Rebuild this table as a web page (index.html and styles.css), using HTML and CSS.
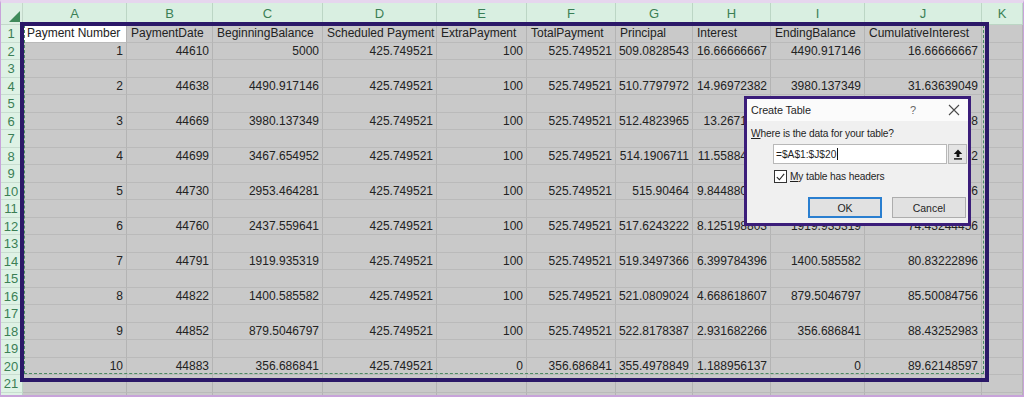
FILE: index.html
```html
<!DOCTYPE html>
<html>
<head>
<meta charset="utf-8">
<link rel="stylesheet" href="styles.css">
</head>
<body>
<div class="screen">
  <div class="sheet">
    <div class="corner"><span class="tri"></span></div>
    <div class="ch">A</div><div class="ch">B</div><div class="ch">C</div><div class="ch">D</div><div class="ch">E</div><div class="ch">F</div><div class="ch">G</div><div class="ch">H</div><div class="ch">I</div><div class="ch">J</div><div class="ch">K</div>

    <div class="rh">1</div>
    <div class="c hd active">Payment Number</div><div class="c hd">PaymentDate</div><div class="c hd">BeginningBalance</div><div class="c hd">Scheduled Payment</div><div class="c hd">ExtraPayment</div><div class="c hd">TotalPayment</div><div class="c hd">Principal</div><div class="c hd">Interest</div><div class="c hd">EndingBalance</div><div class="c hd">CumulativeInterest</div><div class="c"></div>

    <div class="rh">2</div>
    <div class="c n">1</div><div class="c n">44610</div><div class="c n">5000</div><div class="c n">425.749521</div><div class="c n">100</div><div class="c n">525.749521</div><div class="c n">509.0828543</div><div class="c n">16.66666667</div><div class="c n">4490.917146</div><div class="c n">16.66666667</div><div class="c"></div>
    <div class="rh">3</div>
    <div class="c"></div><div class="c"></div><div class="c"></div><div class="c"></div><div class="c"></div><div class="c"></div><div class="c"></div><div class="c"></div><div class="c"></div><div class="c"></div><div class="c"></div>

    <div class="rh">4</div>
    <div class="c n">2</div><div class="c n">44638</div><div class="c n">4490.917146</div><div class="c n">425.749521</div><div class="c n">100</div><div class="c n">525.749521</div><div class="c n">510.7797972</div><div class="c n">14.96972382</div><div class="c n">3980.137349</div><div class="c n">31.63639049</div><div class="c"></div>
    <div class="rh">5</div>
    <div class="c"></div><div class="c"></div><div class="c"></div><div class="c"></div><div class="c"></div><div class="c"></div><div class="c"></div><div class="c"></div><div class="c"></div><div class="c"></div><div class="c"></div>

    <div class="rh">6</div>
    <div class="c n">3</div><div class="c n">44669</div><div class="c n">3980.137349</div><div class="c n">425.749521</div><div class="c n">100</div><div class="c n">525.749521</div><div class="c n">512.4823965</div><div class="c n">13.2671245</div><div class="c n">3467.654952</div><div class="c n">44.90351498</div><div class="c"></div>
    <div class="rh">7</div>
    <div class="c"></div><div class="c"></div><div class="c"></div><div class="c"></div><div class="c"></div><div class="c"></div><div class="c"></div><div class="c"></div><div class="c"></div><div class="c"></div><div class="c"></div>

    <div class="rh">8</div>
    <div class="c n">4</div><div class="c n">44699</div><div class="c n">3467.654952</div><div class="c n">425.749521</div><div class="c n">100</div><div class="c n">525.749521</div><div class="c n">514.1906711</div><div class="c n">11.55884984</div><div class="c n">2953.464281</div><div class="c n">56.46236482</div><div class="c"></div>
    <div class="rh">9</div>
    <div class="c"></div><div class="c"></div><div class="c"></div><div class="c"></div><div class="c"></div><div class="c"></div><div class="c"></div><div class="c"></div><div class="c"></div><div class="c"></div><div class="c"></div>

    <div class="rh">10</div>
    <div class="c n">5</div><div class="c n">44730</div><div class="c n">2953.464281</div><div class="c n">425.749521</div><div class="c n">100</div><div class="c n">525.749521</div><div class="c n">515.90464</div><div class="c n">9.844880937</div><div class="c n">2437.559641</div><div class="c n">66.30724576</div><div class="c"></div>
    <div class="rh">11</div>
    <div class="c"></div><div class="c"></div><div class="c"></div><div class="c"></div><div class="c"></div><div class="c"></div><div class="c"></div><div class="c"></div><div class="c"></div><div class="c"></div><div class="c"></div>

    <div class="rh">12</div>
    <div class="c n">6</div><div class="c n">44760</div><div class="c n">2437.559641</div><div class="c n">425.749521</div><div class="c n">100</div><div class="c n">525.749521</div><div class="c n">517.6243222</div><div class="c n">8.125198803</div><div class="c n">1919.935319</div><div class="c n">74.43244456</div><div class="c"></div>
    <div class="rh">13</div>
    <div class="c"></div><div class="c"></div><div class="c"></div><div class="c"></div><div class="c"></div><div class="c"></div><div class="c"></div><div class="c"></div><div class="c"></div><div class="c"></div><div class="c"></div>

    <div class="rh">14</div>
    <div class="c n">7</div><div class="c n">44791</div><div class="c n">1919.935319</div><div class="c n">425.749521</div><div class="c n">100</div><div class="c n">525.749521</div><div class="c n">519.3497366</div><div class="c n">6.399784396</div><div class="c n">1400.585582</div><div class="c n">80.83222896</div><div class="c"></div>
    <div class="rh">15</div>
    <div class="c"></div><div class="c"></div><div class="c"></div><div class="c"></div><div class="c"></div><div class="c"></div><div class="c"></div><div class="c"></div><div class="c"></div><div class="c"></div><div class="c"></div>

    <div class="rh">16</div>
    <div class="c n">8</div><div class="c n">44822</div><div class="c n">1400.585582</div><div class="c n">425.749521</div><div class="c n">100</div><div class="c n">525.749521</div><div class="c n">521.0809024</div><div class="c n">4.668618607</div><div class="c n">879.5046797</div><div class="c n">85.50084756</div><div class="c"></div>
    <div class="rh">17</div>
    <div class="c"></div><div class="c"></div><div class="c"></div><div class="c"></div><div class="c"></div><div class="c"></div><div class="c"></div><div class="c"></div><div class="c"></div><div class="c"></div><div class="c"></div>

    <div class="rh">18</div>
    <div class="c n">9</div><div class="c n">44852</div><div class="c n">879.5046797</div><div class="c n">425.749521</div><div class="c n">100</div><div class="c n">525.749521</div><div class="c n">522.8178387</div><div class="c n">2.931682266</div><div class="c n">356.686841</div><div class="c n">88.43252983</div><div class="c"></div>
    <div class="rh">19</div>
    <div class="c"></div><div class="c"></div><div class="c"></div><div class="c"></div><div class="c"></div><div class="c"></div><div class="c"></div><div class="c"></div><div class="c"></div><div class="c"></div><div class="c"></div>

    <div class="rh">20</div>
    <div class="c n">10</div><div class="c n">44883</div><div class="c n">356.686841</div><div class="c n">425.749521</div><div class="c n">0</div><div class="c n">356.686841</div><div class="c n">355.4978849</div><div class="c n">1.188956137</div><div class="c n">0</div><div class="c n">89.62148597</div><div class="c"></div>
    <div class="rh">21</div>
    <div class="c"></div><div class="c"></div><div class="c"></div><div class="c"></div><div class="c"></div><div class="c"></div><div class="c"></div><div class="c"></div><div class="c"></div><div class="c"></div><div class="c"></div>
    <div class="rh"></div>
    <div class="c"></div><div class="c"></div><div class="c"></div><div class="c"></div><div class="c"></div><div class="c"></div><div class="c"></div><div class="c"></div><div class="c"></div><div class="c"></div><div class="c"></div>
  </div>

  <div class="ants"></div>
  <div class="frame"></div>

  <div class="dialog">
    <div class="titlebar">
      <span class="title">Create Table</span>
      <span class="help">?</span>
      <svg class="close" width="12" height="12" viewBox="0 0 12 12"><path d="M1 1L11 11M11 1L1 11" stroke="#4a4a4a" stroke-width="1.1" fill="none"/></svg>
    </div>
    <div class="body">
      <div class="label"><u>W</u>here is the data for your table?</div>
      <div class="rangebox">
        <div class="input"><span class="val">=$A$1:$J$20</span><span class="caret"></span></div>
        <div class="collapse"><svg width="10" height="11" viewBox="0 0 10 11"><path d="M5 0.5L9.2 5H6.4V8H3.6V5H0.8Z" fill="#111"/><rect x="1" y="9.2" width="8" height="1.4" fill="#111"/></svg></div>
      </div>
      <div class="check">
        <span class="box"><svg width="12" height="12" viewBox="0 0 12 12"><path d="M2 6.2L4.8 9L10 2.6" stroke="#222" stroke-width="1.2" fill="none"/></svg></span>
        <span class="clabel"><u>M</u>y table has headers</span>
      </div>
      <div class="buttons">
        <div class="btn ok">OK</div>
        <div class="btn">Cancel</div>
      </div>
    </div>
  </div>
</div>
</body>
</html>
```
FILE: styles.css
```css
* { box-sizing: border-box; }
html, body { margin: 0; padding: 0; }
body { width: 1024px; height: 397px; overflow: hidden; background: #c9c9c9; }

.screen {
  position: relative;
  width: 1024px;
  height: 397px;
  overflow: hidden;
  border-top: 3px solid #e6d6ee;
  border-left: 1px solid #c8a3da;
  border-right: 1px solid #c8a3da;
  border-bottom: 2px solid #c8a3da;
  background: #c9c9c9;
  font-family: "Liberation Sans", Arial, sans-serif;
}

.sheet {
  display: grid;
  grid-template-columns: 22px 104px 86px 110px 114px 90px 89px 77px 78px 94px 117px 41px;
  grid-template-rows: 22px;
  grid-auto-rows: 17.5px;
}

.corner {
  position: relative;
  background: #dcefe3;
  border-right: 1px solid #c3d8ca;
  border-bottom: 1px solid #c3d8ca;
}
.tri {
  position: absolute;
  right: 2px;
  bottom: 2px;
  width: 0;
  height: 0;
  border-left: 11px solid transparent;
  border-bottom: 11px solid #3f8a5a;
}

.ch {
  background: #d9efe1;
  border-right: 1px solid #bcd6c5;
  border-bottom: 1px solid #bcd6c5;
  color: #3b7f55;
  font-size: 13px;
  text-align: center;
  line-height: 22px;
}

.rh {
  background: #def2e5;
  border-right: 1px solid #bcd6c5;
  border-bottom: 1px solid #c8ddd0;
  color: #3b7f55;
  font-size: 13px;
  text-align: center;
  line-height: 17.5px;
  padding-right: 1px;
}

.c {
  background: #c9c9c9;
  border-right: 1px solid #b4b4b4;
  border-bottom: 1px solid #bababa;
  color: #222;
  font-size: 12px;
  line-height: 17.5px;
  white-space: nowrap;
  overflow: hidden;
}
.c.n { text-align: right; padding-right: 3px; }
.c.hd { padding-left: 4px; overflow: visible; }
.c.active { background: #ffffff; }

.frame {
  position: absolute;
  left: 19px;
  top: 19px;
  width: 969px;
  height: 360px;
  border: 4px solid #2b1868;
  pointer-events: none;
}
.ants {
  position: absolute;
  left: 23px;
  top: 22px;
  width: 960px;
  height: 349px;
  border: 1px dashed #4b8a63;
  pointer-events: none;
}

.dialog {
  position: absolute;
  left: 743px;
  top: 93px;
  width: 227px;
  height: 130px;
  border: 3px solid #3b1d7a;
  background: #f0f0f0;
  font-family: "Liberation Sans", Arial, sans-serif;
  color: #1f1f1f;
  display: flex;
  flex-direction: column;
}
.titlebar {
  height: 22px;
  background: #fbfbfb;
  display: flex;
  align-items: center;
  padding-left: 4px;
  padding-right: 8px;
}
.title { font-size: 10.8px; flex: 1; letter-spacing: -0.1px; }
.help { font-size: 11px; color: #666; margin-right: 32px; }
.close { display: block; }

.body {
  flex: 1;
  padding: 5px 0 0 4px;
  display: flex;
  flex-direction: column;
}
.label { font-size: 10.2px; line-height: 16px; letter-spacing: -0.15px; }
.rangebox {
  display: flex;
  margin-top: 2px;
  margin-left: 22px;
  height: 20px;
}
.input {
  width: 174px;
  height: 20px;
  background: #fff;
  border: 1px solid #b8b8b8;
  font-size: 10.2px;
  padding-left: 2px;
  display: flex;
  align-items: center;
}
.caret {
  display: block;
  width: 1px;
  height: 12px;
  background: #111;
  margin-left: 1px;
}
.collapse {
  width: 19px;
  height: 20px;
  margin-left: 1px;
  background: #e4e4e4;
  border: 1px solid #b8b8b8;
  display: flex;
  align-items: center;
  justify-content: center;
}
.collapse svg { display: block; }

.check {
  display: flex;
  align-items: center;
  margin-top: 6px;
  margin-left: 23px;
}
.box {
  width: 13px;
  height: 13px;
  border: 1px solid #333;
  background: #fff;
  display: flex;
  align-items: center;
  justify-content: center;
}
.box svg { display: block; }
.clabel { font-size: 10.2px; margin-left: 3px; letter-spacing: -0.15px; }

.buttons {
  display: flex;
  margin-top: 14px;
  margin-left: 57px;
  gap: 10px;
}
.btn {
  width: 74px;
  height: 21px;
  background: #e1e1e1;
  border: 1px solid #adadad;
  font-size: 10.5px;
  display: flex;
  align-items: center;
  justify-content: center;
}
.btn.ok { border: 2px solid #2a7fd0; }
```
